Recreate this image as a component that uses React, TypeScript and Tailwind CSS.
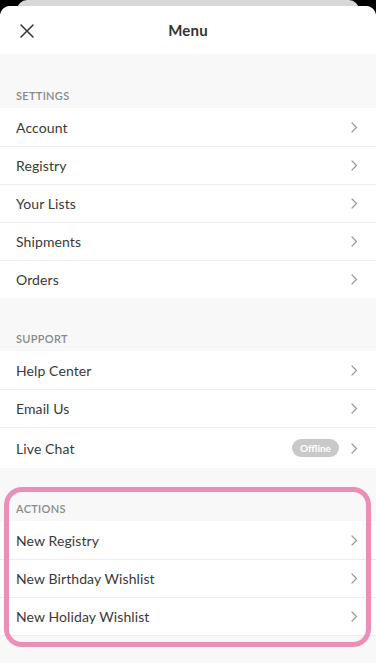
import React from 'react'

const font = { fontFamily: 'Lato, "Open Sans", sans-serif' }

function Chevron() {
  return (
    <svg width="7" height="11" viewBox="0 0 7 11" fill="none" className="shrink-0">
      <path d="M1 1l4.5 4.5L1 10" stroke="#9a9a9a" strokeWidth="1.2" strokeLinecap="round" strokeLinejoin="round" />
    </svg>
  )
}

interface RowProps {
  label: string
  first?: boolean
  badge?: string
  tall?: boolean
}

function Row({ label, first, badge, tall }: RowProps) {
  return (
    <div
      className={`flex items-center bg-white pl-4 pr-[18px] ${tall ? 'h-[41px]' : 'h-[38px]'} ${first ? '' : 'border-t border-[#ededed]'}`}
    >
      <span className="flex-1 text-[14px] text-[#3a3a3a] tracking-[0.1px]">{label}</span>
      {badge && (
        <span className="mr-[12px] h-[18px] w-[47px] rounded-full bg-[#c9c9c9] text-white text-[10px] font-bold flex items-center justify-center">
          {badge}
        </span>
      )}
      <Chevron />
    </div>
  )
}

function SectionHeader({ title, tall }: { title: string; tall?: boolean }) {
  return (
    <div className={`flex items-end px-4 pb-[6px] ${tall ? 'h-[54px]' : 'h-[53px]'}`}>
      <span className="text-[11px] leading-[13px] font-semibold text-[#8a8a8a] tracking-[0.3px] uppercase">{title}</span>
    </div>
  )
}

export default function App() {
  return (
    <div className="relative w-[376px] h-[663px] bg-black overflow-hidden" style={font}>
      {/* stacked card behind */}
      <div className="mx-[17px] h-[14px] rounded-t-[10px] bg-[#d8d8d8]" />

      {/* sheet */}
      <div className="relative -mt-[8px] h-[657px] rounded-t-[10px] bg-[#f8f8f8] overflow-hidden">
        <header className="relative h-[48px] bg-white flex items-center justify-center">
          <svg width="14" height="14" viewBox="0 0 14 14" className="absolute left-[20px] top-[18px]">
            <path d="M1 1l12 12M13 1L1 13" stroke="#333" strokeWidth="1.5" strokeLinecap="round" />
          </svg>
          <h1 className="text-[15px] font-bold text-[#333] tracking-[0.2px]">Menu</h1>
        </header>

        <SectionHeader title="Settings" tall />
        <Row label="Account" first />
        <Row label="Registry" />
        <Row label="Your Lists" />
        <Row label="Shipments" />
        <Row label="Orders" />

        <SectionHeader title="Support" />
        <Row label="Help Center" first />
        <Row label="Email Us" />
        <Row label="Live Chat" badge="Offline" tall />

        <SectionHeader title="Actions" />
        <Row label="New Registry" first />
        <Row label="New Birthday Wishlist" />
        <Row label="New Holiday Wishlist" />
        <div className="border-t border-[#ededed]" />
      </div>

      {/* highlight */}
      <div className="absolute left-[4px] top-[487px] w-[367px] h-[160px] rounded-[18px] border-[5px] border-[#ec8fb6] pointer-events-none" />
    </div>
  )
}
